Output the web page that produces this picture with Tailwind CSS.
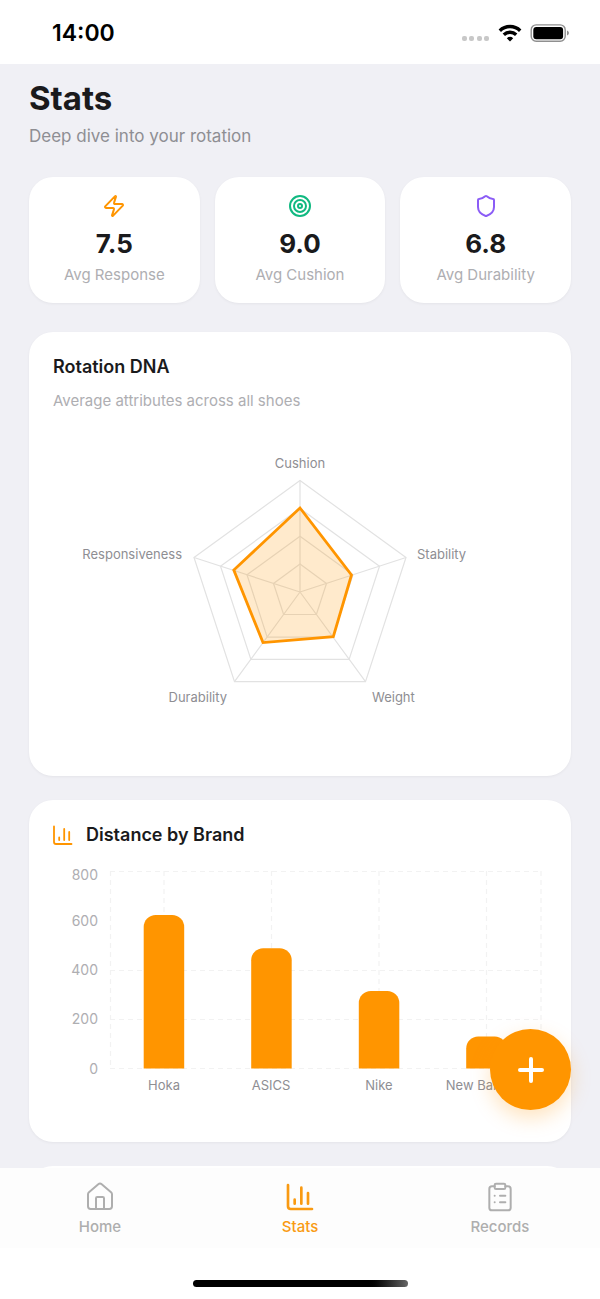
<!DOCTYPE html>
<html lang="en">
<head>
<meta charset="utf-8">
<meta name="viewport" content="width=device-width, initial-scale=1">
<title>Stats</title>
<script src="https://cdn.jsdelivr.net/npm/@tailwindcss/browser@4"></script>
</head>
<body class="flex h-screen flex-col bg-white font-['Inter',sans-serif] text-[#1a1a1c]">
  <!-- Status bar -->
  <header class="flex h-16 shrink-0 items-center justify-between pt-[2px] pr-[31px] pl-[52px]">
    <time class="text-[23px] leading-7 font-semibold text-black">14:00</time>
    <div class="flex items-center gap-2" aria-hidden="true">
      <svg class="mt-3 h-2 w-7" viewBox="0 0 28 8" fill="#c8c8c8"><rect x="0" y="1" width="5" height="5" rx="2"/><rect x="7" y="1" width="5" height="5" rx="2"/><rect x="15" y="1" width="5" height="5" rx="2"/><rect x="22" y="1" width="5" height="5" rx="2"/></svg>
      <svg class="h-[18px] w-6" viewBox="0 0 24 18" fill="none" stroke="#000" stroke-width="3.4"><path d="M1.8 6.7a14.6 14.6 0 0 1 20.4 0"/><path d="M5.8 10.8a9 9 0 0 1 12.4 0"/><path d="M12 17.6 8.8 14.2a4.7 4.7 0 0 1 6.4 0z" fill="#000" stroke="none"/></svg>
      <svg class="h-[18px] w-[39px]" viewBox="0 0 39 18"><rect x="1.2" y=".9" width="34" height="16.4" rx="5" fill="#fff" stroke="#8f8f8f" stroke-width="1.4"/><rect x="3.3" y="3" width="29.8" height="12.2" rx="3" fill="#000"/><path d="M37.2 6.600q1.6.7 1.6 2.5t-1.6 2.5z" fill="#777"/></svg>
    </div>
  </header>

  <div class="relative min-h-0 flex-1 bg-[#f0f0f5]">
    <main class="flex h-full flex-col gap-6 overflow-y-auto px-[29px] pt-[14px] pb-6 [scrollbar-width:none]">
      <div class="shrink-0">
        <h1 class="text-[33px] leading-10 font-bold">Stats</h1>
        <p class="mt-1 text-[17px] leading-7 text-[#8e8e93]">Deep dive into your rotation</p>
      </div>

      <section class="mt-[3px] mb-[5px] grid shrink-0 grid-cols-3 gap-[15px]" aria-label="Averages">
        <div class="flex flex-col items-center rounded-3xl bg-white pt-[17px] pb-[18px] shadow-[0_1px_3px_rgba(0,0,0,0.05)]">
          <svg class="size-6" viewBox="0 0 24 24" fill="none" stroke="#ff9500" stroke-width="2" stroke-linecap="round" stroke-linejoin="round"><path d="M4 14a1 1 0 0 1-.78-1.63l9.9-10.2a.5.5 0 0 1 .86.46l-1.92 6.02A1 1 0 0 0 13 10h7a1 1 0 0 1 .78 1.63l-9.9 10.2a.5.5 0 0 1-.86-.46l1.92-6.02A1 1 0 0 0 11 14z"/></svg>
          <strong class="mt-2 text-[26px] leading-9 font-bold">7.5</strong>
          <span class="mt-[3px] text-[15px] leading-5 text-[#aeaeb2]">Avg Response</span>
        </div>
        <div class="flex flex-col items-center rounded-3xl bg-white pt-[17px] pb-[18px] shadow-[0_1px_3px_rgba(0,0,0,0.05)]">
          <svg class="size-6" viewBox="0 0 24 24" fill="none" stroke="#10b981" stroke-width="2"><circle cx="12" cy="12" r="10"/><circle cx="12" cy="12" r="6"/><circle cx="12" cy="12" r="2"/></svg>
          <strong class="mt-2 text-[26px] leading-9 font-bold">9.0</strong>
          <span class="mt-[3px] text-[15px] leading-5 text-[#aeaeb2]">Avg Cushion</span>
        </div>
        <div class="flex flex-col items-center rounded-3xl bg-white pt-[17px] pb-[18px] shadow-[0_1px_3px_rgba(0,0,0,0.05)]">
          <svg class="size-6" viewBox="0 0 24 24" fill="none" stroke="#8b5cf6" stroke-width="2" stroke-linecap="round" stroke-linejoin="round"><path d="M20 13c0 5-3.5 7.5-7.66 8.95a1 1 0 0 1-.67-.01C7.5 20.5 4 18 4 13V6a1 1 0 0 1 1-1c2 0 4.5-1.2 6.24-2.72a1.17 1.17 0 0 1 1.52 0C14.51 3.81 17 5 19 5a1 1 0 0 1 1 1z"/></svg>
          <strong class="mt-2 text-[26px] leading-9 font-bold">6.8</strong>
          <span class="mt-[3px] text-[15px] leading-5 text-[#aeaeb2]">Avg Durability</span>
        </div>
      </section>

      <section class="shrink-0 rounded-3xl bg-white px-6 pt-[23px] pb-10 shadow-[0_1px_3px_rgba(0,0,0,0.05)]">
        <h2 class="text-lg leading-6 font-semibold">Rotation DNA</h2>
        <p class="mt-3 text-[15px] leading-5 text-[#aeaeb2]">Average attributes across all shoes</p>
        <svg class="mt-[25px] w-full" viewBox="0 0 494 300" role="img" aria-label="Radar chart of average attributes">
          <g fill="none" stroke="#e2e2e2" stroke-width="1.2">
            <path d="M247 44.5 353 121.5 312.5 245.7H181.5L141 121.5z"/>
            <path d="M247 72.4 326.5 130.2 296.1 223.4H197.9L167.5 130.2z"/>
            <path d="M247 100.2 300 138.8 279.8 201.1H214.2L194 138.8z"/>
            <path d="M247 128.1 273.5 147.4 263.4 178.5H230.6L220.5 147.4z"/>
            <path d="M247 156V44.5M247 156 353 121.5M247 156 312.5 245.7M247 156 181.5 245.7M247 156 141 121.5"/>
          </g>
          <path d="M247 72 298.5 139 280.3 200.7 210 206.6 180.8 134z" fill="#ff9500" fill-opacity=".2" stroke="#ff9500" stroke-width="2.8"/>
          <g class="text-[13px]" fill="#8e8e93">
            <text x="247" y="32" text-anchor="middle">Cushion</text>
            <text x="364" y="123">Stability</text>
            <text x="319" y="266">Weight</text>
            <text x="174" y="266" text-anchor="end">Durability</text>
            <text x="129" y="123" text-anchor="end">Responsiveness</text>
          </g>
        </svg>
      </section>

      <section class="shrink-0 rounded-3xl bg-white px-6 pt-[23px] pb-6 shadow-[0_1px_3px_rgba(0,0,0,0.05)]">
        <h2 class="flex items-center gap-3 text-lg leading-6 font-semibold">
          <svg class="size-[21px]" viewBox="0 0 21 21" fill="none" stroke="#ff9500" stroke-width="1.8" stroke-linecap="round" stroke-linejoin="round"><path d="M1 1.5V17a2 2 0 0 0 2 2h15.500M6.2 15v-2.5M11.2 15V4M16.2 15V7"/></svg>
          Distance by Brand
        </h2>
        <svg class="mt-[11px] w-full" viewBox="0 0 494 260" role="img" aria-label="Bar chart of distance by brand">
          <path d="M57 13.5H488M57 112.5H488M57 161.5H488M57 210.5H488M57.5 13V211M111 13V211M218.5 13V211M326 13V211M433.5 13V211M488 13V211" fill="none" stroke="#f2f2f2" stroke-width="1.2" stroke-dasharray="5 4"/>
          <g fill="#ff9500">
            <path d="M90.7 210.5V69a12 12 0 0 1 12-12h16.5a12 12 0 0 1 12 12V210.5z"/>
            <path d="M198.2 210.5V102.3a12 12 0 0 1 12-12h16.5a12 12 0 0 1 12 12V210.5z"/>
            <path d="M305.8 210.5V145a12 12 0 0 1 12-12h16.5a12 12 0 0 1 12 12V210.5z"/>
            <path d="M413.2 210.5V190.5a12 12 0 0 1 12-12h16.5a12 12 0 0 1 12 12V210.5z"/>
          </g>
          <g class="text-sm" fill="#aeaeb2" text-anchor="end">
            <text x="45" y="22">800</text>
            <text x="45" y="68">600</text>
            <text x="45" y="117">400</text>
            <text x="45" y="166">200</text>
            <text x="45" y="216">0</text>
          </g>
          <g class="text-[13px]" fill="#8e8e93" text-anchor="middle">
            <text x="111" y="232">Hoka</text>
            <text x="218" y="232">ASICS</text>
            <text x="326" y="232">Nike</text>
            <text x="433" y="232">New Balance</text>
          </g>
        </svg>
      </section>

      <section class="h-20 shrink-0 rounded-3xl bg-white" aria-label="More stats"></section>
    </main>

    <button type="button" aria-label="Add" class="absolute right-[29px] bottom-[58px] grid size-[81px] place-items-center rounded-full bg-[#ff9500] shadow-[0_8px_20px_rgba(255,149,0,0.25)]">
      <svg class="size-7" viewBox="0 0 28 28" fill="none" stroke="#fff" stroke-width="4" stroke-linecap="round"><path d="M14 3v22M3 14h22"/></svg>
    </button>
  </div>

  <!-- Tab bar -->
  <footer class="flex h-[131px] shrink-0 flex-col bg-white">
    <nav class="grid h-20 grid-cols-3 bg-[#fdfdfd] text-[15px] leading-5 font-medium text-[#aeaeae]">
      <a href="#home" class="flex flex-col items-center gap-1 pt-[13px]">
        <svg class="size-8" viewBox="0 0 24 24" fill="none" stroke="currentColor" stroke-width="1.5" stroke-linecap="round" stroke-linejoin="round"><path d="M15 21v-8a1 1 0 0 0-1-1h-4a1 1 0 0 0-1 1v8"/><path d="M3 10a2 2 0 0 1 .71-1.53l7-6a2 2 0 0 1 2.58 0l7 6A2 2 0 0 1 21 10v9a2 2 0 0 1-2 2H5a2 2 0 0 1-2-2z"/></svg>
        Home
      </a>
      <a href="#stats" aria-current="page" class="flex flex-col items-center gap-1 pt-[13px] text-[#f99a12]">
        <svg class="size-8" viewBox="0 0 24 24" fill="none" stroke="currentColor" stroke-width="2" stroke-linecap="round" stroke-linejoin="round"><path d="M3 3v16a2 2 0 0 0 2 2h16M18 17V9M13 17V5M8 17v-3"/></svg>
        Stats
      </a>
      <a href="#records" class="flex flex-col items-center gap-1 pt-[13px]">
        <svg class="size-8" viewBox="0 0 24 24" fill="none" stroke="currentColor" stroke-width="1.5" stroke-linecap="round" stroke-linejoin="round"><rect x="8" y="2" width="8" height="4" rx="1"/><path d="M16 4h2a2 2 0 0 1 2 2v14a2 2 0 0 1-2 2H6a2 2 0 0 1-2-2V6a2 2 0 0 1 2-2h2M12 11h4M12 16h4M8 11h.01M8 16h.01"/></svg>
        Records
      </a>
    </nav>
    <div class="mx-auto mt-8 h-[7px] w-[215px] rounded-full bg-linear-to-r from-black from-80% to-[#666]"></div>
  </footer>
</body>
</html>
